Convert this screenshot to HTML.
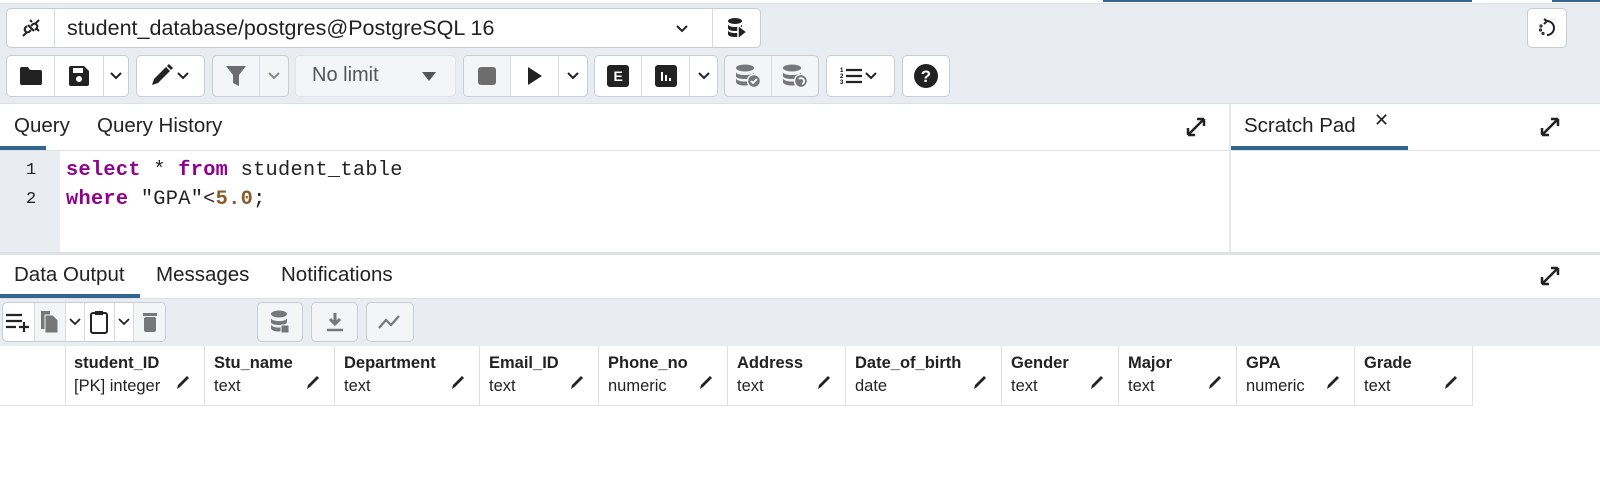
<!DOCTYPE html>
<html><head><meta charset="utf-8"><style>
*{box-sizing:border-box;margin:0;padding:0}
body{width:1600px;height:503px;background:#fff;position:relative;overflow:hidden;font-family:"Liberation Sans",Roboto,sans-serif;color:#222}
.a{position:absolute}
.bg{background:#e9ecf1}
.grp{position:absolute;top:55px;height:42px;border:1px solid #c7ccd5;border-radius:5px;background:#fff;display:flex;overflow:hidden}
.grp>div{border-right:1px solid #d6dae0;display:flex;align-items:center;justify-content:center;height:100%}
.grp>div:last-child{border-right:none}
.dis{background:#f4f5f7}
.tab{position:absolute;font-size:20.5px;color:#222}
.ul{position:absolute;height:4px;background:#326690}
.code{font-family:"Liberation Mono","DejaVu Sans Mono",monospace;font-size:20.3px;position:absolute;left:66px;letter-spacing:0.3px}
.kw{color:#90008e;font-weight:bold}
.num{color:#8b5a2b;font-weight:bold}
.th{position:absolute;top:346px;height:59px;border-right:1px solid #dde0e5;font-size:16.5px}
.th b{position:absolute;left:9px;top:8px;font-weight:bold;font-size:16.5px}
.th span{position:absolute;left:9px;top:31px;font-size:16.5px}
.th svg{position:absolute;right:14px;top:28px}
</style></head><body>
<div class="a bg" style="left:0;top:3px;width:1600px;height:100px;border-top:1px solid #dde0e5"></div>
<div class="a" style="left:1103px;top:0;width:369px;height:2px;background:#326690"></div>
<div class="a" style="left:1552px;top:0;width:48px;height:2px;background:#326690"></div>
<div class="a" style="left:6px;top:8px;width:755px;height:40px;border:1px solid #c7ccd5;border-radius:5px;background:#fff">
 <div class="a" style="left:0;top:0;width:48px;height:38px;border-right:1px solid #d6dae0;display:flex;align-items:center;justify-content:center">
  <svg width="24" height="24" viewBox="0 0 24 24" fill="none" stroke="#222" stroke-width="2"><path d="M4 20l4-4M20 4l-4 4M8 10l-2 2a3 3 0 004 4l2-2M16 14l2-2a3 3 0 00-4-4l-2 2M9 9l6 6M13 6l-2-2M18 13l2 2"/></svg></div>
 <div class="a" style="left:60px;top:7px;font-size:21.5px">student_database/postgres@PostgreSQL 16</div>
 <svg class="a" style="left:668px;top:13px" width="14" height="14" viewBox="0 0 14 14"><path d="M2 4l5 5 5-5" stroke="#222" stroke-width="2" fill="none"/></svg>
 <div class="a" style="left:705px;top:0;width:48px;height:38px;border-left:1px solid #d6dae0;display:flex;align-items:center;justify-content:center">
  <svg width="22" height="24" viewBox="0 0 22 24"><ellipse cx="9" cy="5" rx="7" ry="3" fill="#222"/><path d="M2 8c0 4 14 4 14 0v4c0 4-14 4-14 0zM2 14c0 4 14 4 14 0v4c0 4-14 4-14 0z" fill="#222"/><path d="M12 9l9 7-9 7z" fill="#222" stroke="#fff" stroke-width="1.5"/></svg></div>
</div>
<div class="a" style="left:1527px;top:8px;width:40px;height:40px;border:1px solid #c7ccd5;border-radius:5px;background:#fff"><svg class="a" style="left:9px;top:9px" width="20" height="20" viewBox="0 0 20 20" fill="none" stroke="#222" stroke-width="2"><path d="M10 3a7 7 0 110 14" /><path d="M7 1l3 2-3 3" /><circle cx="4" cy="8" r="0.6"/><circle cx="3.5" cy="12" r="0.6"/><circle cx="6" cy="15.5" r="0.6"/></svg></div>
<div class="grp" style="left:6px;width:123px">
 <div style="width:48px"><svg width="24" height="20" viewBox="0 0 24 20"><path d="M1 3a2 2 0 012-2h6l2 3h10a2 2 0 012 2v11a2 2 0 01-2 2H3a2 2 0 01-2-2z" fill="#222"/></svg></div>
 <div style="width:49px"><svg width="22" height="22" viewBox="0 0 22 22"><path d="M1 3a2 2 0 012-2h13l5 5v13a2 2 0 01-2 2H3a2 2 0 01-2-2z" fill="#222"/><rect x="5" y="3" width="10" height="5" fill="#fff"/><circle cx="11" cy="14" r="3" fill="#fff"/></svg></div>
 <div style="width:24px"><svg width="14" height="14"><path d="M2 4l5 5 5-5" stroke="#222" stroke-width="2" fill="none"/></svg></div>
</div>
<div class="grp" style="left:136px;width:69px"><div style="width:69px"><svg width="44" height="24" viewBox="0 0 44 24"><path d="M3 21l2-6 12-12 4 4-12 12z" fill="#222"/><path d="M18 2l2-2 4 4-2 2z" fill="#222"/><path d="M29 9l5 5 5-5" stroke="#222" stroke-width="2" fill="none"/></svg></div></div>
<div class="grp dis" style="left:212px;width:77px"><div style="width:48px"><svg width="20" height="22" viewBox="0 0 20 22"><path d="M0 1h20l-7 9v11l-6-3v-8z" fill="#6c6c6c"/></svg></div><div style="width:28px"><svg width="14" height="14"><path d="M2 4l5 5 5-5" stroke="#888" stroke-width="2" fill="none"/></svg></div></div>
<div class="a dis" style="left:295px;top:55px;width:161px;height:42px;border-radius:5px;border:1px solid #e0e3e8"><span class="a" style="left:16px;top:8px;font-size:20px;color:#555">No limit</span><svg class="a" style="left:126px;top:16px" width="14" height="10"><path d="M0 0h14l-7 9z" fill="#555"/></svg></div>
<div class="grp" style="left:463px;width:125px">
 <div class="dis" style="width:48px"><div style="width:18px;height:18px;background:#6d6d6d;border-radius:3px"></div></div>
 <div style="width:49px"><svg width="16" height="20"><path d="M1 1l14 9-14 9z" fill="#222"/></svg></div>
 <div style="width:28px"><svg width="14" height="14"><path d="M2 4l5 5 5-5" stroke="#222" stroke-width="2" fill="none"/></svg></div>
</div>
<div class="grp" style="left:594px;width:124px">
 <div style="width:48px"><div style="width:22px;height:22px;background:#222;border-radius:3px;color:#fff;font-weight:bold;font-size:14px;text-align:center;line-height:22px">E</div></div>
 <div style="width:49px"><svg width="22" height="22"><rect width="22" height="22" rx="3" fill="#222"/><path d="M7 7v9M11 10v6M15 13v3" stroke="#fff" stroke-width="2"/></svg></div>
 <div style="width:27px"><svg width="14" height="14"><path d="M2 4l5 5 5-5" stroke="#222" stroke-width="2" fill="none"/></svg></div>
</div>
<div class="grp dis" style="left:724px;width:95px">
 <div style="width:48px"><svg width="26" height="24" viewBox="0 0 26 24"><ellipse cx="10" cy="4" rx="9" ry="3.5" fill="#777"/><path d="M1 8c0 4 18 4 18 0v4c0 4-18 4-18 0zM1 14c0 4 12 4 12 3v4c0 1-12 1-12-3z" fill="#777"/><circle cx="19" cy="17" r="6.5" fill="#777" stroke="#f4f5f7" stroke-width="1.5"/><path d="M16 17l2 2 4-4" stroke="#fff" stroke-width="1.8" fill="none"/></svg></div>
 <div style="width:47px"><svg width="26" height="24" viewBox="0 0 26 24"><ellipse cx="10" cy="4" rx="9" ry="3.5" fill="#777"/><path d="M1 8c0 4 18 4 18 0v4c0 4-18 4-18 0zM1 14c0 4 12 4 12 3v4c0 1-12 1-12-3z" fill="#777"/><circle cx="19" cy="17" r="6.5" fill="#777" stroke="#f4f5f7" stroke-width="1.5"/><path d="M17 15a3 3 0 113 5" stroke="#fff" stroke-width="1.8" fill="none"/></svg></div>
</div>
<div class="grp" style="left:826px;width:69px"><div style="width:69px"><svg width="42" height="20" viewBox="0 0 42 20"><text x="0" y="6" font-size="6" font-family="Liberation Sans" font-weight="bold">1</text><text x="0" y="12" font-size="6" font-family="Liberation Sans" font-weight="bold">2</text><text x="0" y="18" font-size="6" font-family="Liberation Sans" font-weight="bold">3</text><path d="M6 4h16M6 10h16M6 16h16" stroke="#222" stroke-width="2.2"/><path d="M26 7l5 5 5-5" stroke="#222" stroke-width="2" fill="none"/></svg></div></div>
<div class="grp" style="left:902px;width:48px"><div style="width:48px"><svg width="24" height="24"><circle cx="12" cy="12" r="12" fill="#222"/><text x="12" y="18" text-anchor="middle" font-size="17" font-weight="bold" fill="#fff" font-family="Liberation Sans">?</text></svg></div></div>
<div class="a" style="left:0;top:103px;width:1600px;height:1px;background:#dde0e5"></div>
<div class="tab" style="left:14px;top:114px">Query</div>
<div class="tab" style="left:97px;top:114px">Query History</div>
<div class="ul" style="left:0;top:146px;width:46px"></div>
<svg class="a" style="left:1186px;top:117px" width="20" height="20" viewBox="0 0 20 20"><path d="M2 18l16-16M2 18v-7M2 18h7M18 2h-7M18 2v7" stroke="#222" stroke-width="2.5" fill="none"/></svg>
<div class="a" style="left:1229px;top:104px;width:2px;height:149px;background:#e6e8ec"></div>
<div class="tab" style="left:1244px;top:114px">Scratch Pad</div>
<div class="a" style="left:1374px;top:110px;font-size:18px">✕</div>
<div class="ul" style="left:1231px;top:146px;width:177px"></div>
<svg class="a" style="left:1540px;top:117px" width="20" height="20" viewBox="0 0 20 20"><path d="M2 18l16-16M2 18v-7M2 18h7M18 2h-7M18 2v7" stroke="#222" stroke-width="2.5" fill="none"/></svg>
<div class="a" style="left:0;top:150px;width:1229px;height:1px;background:#dde0e5"></div>
<div class="a" style="left:1231px;top:150px;width:369px;height:1px;background:#dde0e5"></div>
<div class="a" style="left:0;top:151px;width:60px;height:101px;background:#e9ecf1"></div>
<div class="a" style="left:26px;top:161px;font-size:17px;font-family:'Liberation Mono',monospace">1</div>
<div class="a" style="left:26px;top:190px;font-size:17px;font-family:'Liberation Mono',monospace">2</div>
<div class="code" style="top:159px"><span class="kw">select</span> * <span class="kw">from</span> student_table</div>
<div class="code" style="top:188px"><span class="kw">where</span> "GPA"&lt;<span class="num">5.0</span>;</div>
<div class="a" style="left:0;top:252px;width:1600px;height:3px;background:#dde0e5"></div>
<div class="tab" style="left:14px;top:263px">Data Output</div>
<div class="tab" style="left:156px;top:263px">Messages</div>
<div class="tab" style="left:281px;top:263px">Notifications</div>
<div class="ul" style="left:0;top:294px;width:140px"></div>
<svg class="a" style="left:1540px;top:266px" width="20" height="20" viewBox="0 0 20 20"><path d="M2 18l16-16M2 18v-7M2 18h7M18 2h-7M18 2v7" stroke="#222" stroke-width="2.5" fill="none"/></svg>
<div class="a bg" style="left:0;top:298px;width:1600px;height:48px;border-top:1px solid #dde0e5"></div>
<div class="grp" style="top:302px;left:2px;width:164px;height:40px">
 <div style="width:32px"><svg width="24" height="20"><path d="M0 3h16M0 9h16M0 15h10M18 10v10M13 15h10" stroke="#222" stroke-width="2.2"/></svg></div>
 <div class="dis" style="width:31px"><svg width="20" height="24"><path d="M1 1h9v18h-9z" fill="#777"/><path d="M5 5h8l5 5v13h-13z" fill="#777" stroke="#f4f5f7"/></svg></div>
 <div style="width:19px"><svg width="12" height="12"><path d="M1 3l5 5 5-5" stroke="#222" stroke-width="1.8" fill="none"/></svg></div>
 <div style="width:31px"><svg width="18" height="24"><rect x="1" y="3" width="16" height="20" rx="2" fill="none" stroke="#222" stroke-width="2"/><rect x="5" y="1" width="8" height="4" fill="#222"/></svg></div>
 <div style="width:19px"><svg width="12" height="12"><path d="M1 3l5 5 5-5" stroke="#222" stroke-width="1.8" fill="none"/></svg></div>
 <div class="dis" style="width:31px"><svg width="14" height="20"><rect x="0" y="1" width="14" height="3" fill="#777"/><rect x="1" y="5" width="12" height="15" rx="2" fill="#777"/></svg></div>
</div>
<div class="grp dis" style="top:302px;left:257px;width:46px;height:40px"><div style="width:46px"><svg width="20" height="24"><ellipse cx="9" cy="4" rx="8" ry="3.5" fill="#777"/><path d="M1 8c0 4 16 4 16 0v4c0 4-16 4-16 0zM1 14c0 4 10 4 10 3v4c0 1-10 1-10-3z" fill="#777"/><rect x="11" y="15" width="8" height="8" rx="1" fill="#777" stroke="#f4f5f7"/></svg></div></div>
<div class="grp dis" style="top:302px;left:311px;width:47px;height:40px"><div style="width:47px"><svg width="18" height="20"><path d="M9 1v11M4 7l5 5 5-5" stroke="#777" stroke-width="3" fill="none"/><path d="M1 18h16" stroke="#777" stroke-width="2.5"/></svg></div></div>
<div class="grp dis" style="top:302px;left:366px;width:48px;height:40px"><div style="width:48px"><svg width="24" height="16"><path d="M1 14l7-8 5 5 8-9" stroke="#777" stroke-width="2.2" fill="none"/></svg></div></div>
<div class="a" style="left:0;top:346px;width:1473px;height:60px;border-bottom:1px solid #dde0e5"></div>
<div class="a" style="left:65px;top:346px;width:1px;height:59px;background:#dde0e5"></div>
<div class="th" style="left:65px;width:140px"><b>student_ID</b><span>[PK] integer</span><svg width="14" height="16"><path d="M1 15l1-4 9-9 2 2-9 9z" fill="#222"/></svg></div>
<div class="th" style="left:205px;width:130px"><b>Stu_name</b><span>text</span><svg width="14" height="16"><path d="M1 15l1-4 9-9 2 2-9 9z" fill="#222"/></svg></div>
<div class="th" style="left:335px;width:145px"><b>Department</b><span>text</span><svg width="14" height="16"><path d="M1 15l1-4 9-9 2 2-9 9z" fill="#222"/></svg></div>
<div class="th" style="left:480px;width:119px"><b>Email_ID</b><span>text</span><svg width="14" height="16"><path d="M1 15l1-4 9-9 2 2-9 9z" fill="#222"/></svg></div>
<div class="th" style="left:599px;width:129px"><b>Phone_no</b><span>numeric</span><svg width="14" height="16"><path d="M1 15l1-4 9-9 2 2-9 9z" fill="#222"/></svg></div>
<div class="th" style="left:728px;width:118px"><b>Address</b><span>text</span><svg width="14" height="16"><path d="M1 15l1-4 9-9 2 2-9 9z" fill="#222"/></svg></div>
<div class="th" style="left:846px;width:156px"><b>Date_of_birth</b><span>date</span><svg width="14" height="16"><path d="M1 15l1-4 9-9 2 2-9 9z" fill="#222"/></svg></div>
<div class="th" style="left:1002px;width:117px"><b>Gender</b><span>text</span><svg width="14" height="16"><path d="M1 15l1-4 9-9 2 2-9 9z" fill="#222"/></svg></div>
<div class="th" style="left:1119px;width:118px"><b>Major</b><span>text</span><svg width="14" height="16"><path d="M1 15l1-4 9-9 2 2-9 9z" fill="#222"/></svg></div>
<div class="th" style="left:1237px;width:118px"><b>GPA</b><span>numeric</span><svg width="14" height="16"><path d="M1 15l1-4 9-9 2 2-9 9z" fill="#222"/></svg></div>
<div class="th" style="left:1355px;width:118px"><b>Grade</b><span>text</span><svg width="14" height="16"><path d="M1 15l1-4 9-9 2 2-9 9z" fill="#222"/></svg></div>
</body></html>
